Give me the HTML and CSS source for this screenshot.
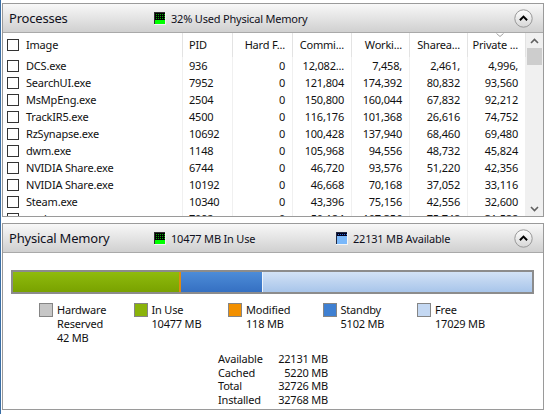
FILE: index.html
```html
<!DOCTYPE html>
<html>
<head>
<meta charset="utf-8">
<link rel="stylesheet" href="styles.css">
</head>
<body>
<div class="win">
  <section class="panel proc">
    <div class="phead">
      <span class="ptitle">Processes</span>
      <span class="pinfo">
        <svg class="meter" width="12" height="13" viewBox="0 0 12 13" shape-rendering="crispEdges">
          <defs><pattern id="gd1" width="2" height="2" patternUnits="userSpaceOnUse"><rect width="2" height="2" fill="#000"/><rect width="1" height="1" fill="#00b000"/></pattern></defs>
          <rect x="0" y="0" width="12" height="13" fill="#f4f4f4"/>
          <rect x="0" y="0" width="11" height="12" fill="#303030"/>
          <rect x="1" y="1" width="10" height="7" fill="url(#gd1)"/>
          <rect x="1" y="8" width="10" height="4" fill="#00ff00"/>
        </svg>
        32% Used Physical Memory
      </span>
      <span class="collapse">
        <svg width="19" height="19" viewBox="0 0 19 19">
          <defs><linearGradient id="cb1" x1="0" y1="0" x2="0" y2="1"><stop offset="0" stop-color="#fefefe"/><stop offset="1" stop-color="#d6d6d6"/></linearGradient></defs>
          <circle cx="9.5" cy="9.5" r="8.7" fill="url(#cb1)" stroke="#979797"/>
          <path d="M5.9 11.2 L9.5 7.6 L13.1 11.2" fill="none" stroke="#000" stroke-width="2"/>
        </svg>
      </span>
    </div>
    <div class="list">
      <div class="table">
        <div class="row head">
          <div class="c img"><span class="cb"></span>Image</div>
          <div class="c pid">PID</div>
          <div class="c">Hard F...</div>
          <div class="c">Commi...</div>
          <div class="c">Worki...</div>
          <div class="c">Sharea...</div>
          <div class="c">Private ...<svg class="sort" width="8" height="4" viewBox="0 0 8 4"><path d="M0.5 0.5 L4 3.5 L7.5 0.5" fill="none" stroke="#a0a0a0" stroke-width="1"/></svg></div>
        </div>
        <div class="row"><div class="c img"><span class="cb"></span>DCS.exe</div><div class="c pid">936</div><div class="c">0</div><div class="c">12,082...</div><div class="c">7,458,</div><div class="c">2,461,</div><div class="c">4,996,</div></div>
        <div class="row"><div class="c img"><span class="cb"></span>SearchUI.exe</div><div class="c pid">7952</div><div class="c">0</div><div class="c">121,804</div><div class="c">174,392</div><div class="c">80,832</div><div class="c">93,560</div></div>
        <div class="row"><div class="c img"><span class="cb"></span>MsMpEng.exe</div><div class="c pid">2504</div><div class="c">0</div><div class="c">150,800</div><div class="c">160,044</div><div class="c">67,832</div><div class="c">92,212</div></div>
        <div class="row"><div class="c img"><span class="cb"></span>TrackIR5.exe</div><div class="c pid">4500</div><div class="c">0</div><div class="c">116,176</div><div class="c">101,368</div><div class="c">26,616</div><div class="c">74,752</div></div>
        <div class="row"><div class="c img"><span class="cb"></span>RzSynapse.exe</div><div class="c pid">10692</div><div class="c">0</div><div class="c">100,428</div><div class="c">137,940</div><div class="c">68,460</div><div class="c">69,480</div></div>
        <div class="row"><div class="c img"><span class="cb"></span>dwm.exe</div><div class="c pid">1148</div><div class="c">0</div><div class="c">105,968</div><div class="c">94,556</div><div class="c">48,732</div><div class="c">45,824</div></div>
        <div class="row"><div class="c img"><span class="cb"></span>NVIDIA Share.exe</div><div class="c pid">6744</div><div class="c">0</div><div class="c">46,720</div><div class="c">93,576</div><div class="c">51,220</div><div class="c">42,356</div></div>
        <div class="row"><div class="c img"><span class="cb"></span>NVIDIA Share.exe</div><div class="c pid">10192</div><div class="c">0</div><div class="c">46,668</div><div class="c">70,168</div><div class="c">37,052</div><div class="c">33,116</div></div>
        <div class="row"><div class="c img"><span class="cb"></span>Steam.exe</div><div class="c pid">10340</div><div class="c">0</div><div class="c">43,396</div><div class="c">75,156</div><div class="c">42,556</div><div class="c">32,600</div></div>
        <div class="row"><div class="c img"><span class="cb"></span>explorer.exe</div><div class="c pid">7092</div><div class="c">0</div><div class="c">50,184</div><div class="c">107,356</div><div class="c">75,748</div><div class="c">31,588</div></div>
      </div>
      <div class="vscroll">
        <div class="arrow"><svg width="9" height="6" viewBox="0 0 9 6"><path d="M1 5 L4.5 1.5 L8 5" fill="none" stroke="#606060" stroke-width="1.6"/></svg></div>
        <div class="track"><div class="thumb"></div></div>
        <div class="arrow"><svg width="9" height="6" viewBox="0 0 9 6"><path d="M1 1 L4.5 4.5 L8 1" fill="none" stroke="#606060" stroke-width="1.6"/></svg></div>
      </div>
    </div>
  </section>

  <section class="panel mem">
    <div class="phead">
      <span class="ptitle">Physical Memory</span>
      <span class="pinfo inuse">
        <svg class="meter" width="12" height="13" viewBox="0 0 12 13" shape-rendering="crispEdges">
          <defs><pattern id="gd2" width="2" height="2" patternUnits="userSpaceOnUse"><rect width="2" height="2" fill="#000"/><rect width="1" height="1" fill="#00b000"/></pattern></defs>
          <rect x="0" y="0" width="12" height="13" fill="#f4f4f4"/>
          <rect x="0" y="0" width="11" height="12" fill="#303030"/>
          <rect x="1" y="1" width="10" height="7" fill="url(#gd2)"/>
          <rect x="1" y="8" width="10" height="4" fill="#00ff00"/>
        </svg>
        10477 MB In Use
      </span>
      <span class="pinfo">
        <svg class="meter" width="12" height="13" viewBox="0 0 12 13" shape-rendering="crispEdges">
          <defs><pattern id="bd1" width="2" height="2" patternUnits="userSpaceOnUse"><rect width="2" height="2" fill="#000020"/><rect width="1" height="1" fill="#3070d0"/></pattern></defs>
          <rect x="0" y="0" width="12" height="13" fill="#f4f4f4"/>
          <rect x="0" y="0" width="11" height="12" fill="#202840"/>
          <rect x="1" y="1" width="10" height="3" fill="url(#bd1)"/>
          <rect x="1" y="4" width="10" height="8" fill="#7ab8fa"/>
        </svg>
        22131 MB Available
      </span>
      <span class="collapse">
        <svg width="19" height="19" viewBox="0 0 19 19">
          <defs><linearGradient id="cb2" x1="0" y1="0" x2="0" y2="1"><stop offset="0" stop-color="#fefefe"/><stop offset="1" stop-color="#d6d6d6"/></linearGradient></defs>
          <circle cx="9.5" cy="9.5" r="8.7" fill="url(#cb2)" stroke="#979797"/>
          <path d="M5.9 11.2 L9.5 7.6 L13.1 11.2" fill="none" stroke="#000" stroke-width="2"/>
        </svg>
      </span>
    </div>
    <div class="mcontent">
      <div class="bar">
        <div class="seg inuse-s"></div>
        <div class="seg mod-s"></div>
        <div class="seg stand-s"></div>
        <div class="seg free-s"></div>
      </div>
      <div class="legend">
        <div class="li"><span class="sw hw"></span><span>Hardware<br>Reserved<br>42 MB</span></div>
        <div class="li"><span class="sw iu"></span><span>In Use<br>10477 MB</span></div>
        <div class="li"><span class="sw md"></span><span>Modified<br>118 MB</span></div>
        <div class="li"><span class="sw sb"></span><span>Standby<br>5102 MB</span></div>
        <div class="li"><span class="sw fr"></span><span>Free<br>17029 MB</span></div>
      </div>
      <div class="stats">
        <span>Available</span><span class="v">22131 MB</span>
        <span>Cached</span><span class="v">5220 MB</span>
        <span>Total</span><span class="v">32726 MB</span>
        <span>Installed</span><span class="v">32768 MB</span>
      </div>
    </div>
  </section>
</div>
</body>
</html>
```

FILE: styles.css
```css
* { box-sizing: border-box; }
html, body { margin: 0; padding: 0; background: #fff; }
body {
  font-family: "Noto Sans", "Open Sans", sans-serif;
  font-size: 11px;
  letter-spacing: -0.2px;
  color: #111;
}
.win {
  width: 546px;
  height: 414px;
  padding: 3px 2px 0 1px;
  border-left: 1px solid #3a6ea5;
  overflow: hidden;
}
.panel {
  border: 1px solid #9a9a9a;
  background: #fff;
}
.proc { height: 214px; }
.mem { margin-top: 6px; height: 187px; }

.phead {
  height: 29px;
  border-bottom: 1px solid #a9a9a9;
  background: linear-gradient(#f8f8f8, #d0d0d0);
  display: flex;
  align-items: center;
  padding-left: 6px;
}
.ptitle {
  width: 145px;
  font-size: 13px;
  color: #101020;
}
.pinfo {
  display: flex;
  align-items: center;
  gap: 5px;
  font-size: 11px;
  color: #101020;
}
.pinfo.inuse { width: 182px; }
.meter { display: block; flex: none; }
.collapse {
  margin-left: auto;
  margin-right: 10px;
  display: flex;
}

.list {
  display: flex;
  height: 183px;
}
.table {
  width: 523px;
  overflow: hidden;
}
.row {
  display: grid;
  grid-template-columns: 180px 50px 60px 59px 58px 58px 58px;
  height: 17px;
  line-height: 17px;
}
.row.head {
  height: 24px;
  line-height: 24px;
}
.c {
  border-right: 1px solid #f0f0f0;
  padding: 0 7px 0 0;
  text-align: right;
  white-space: nowrap;
  overflow: hidden;
}
.head .c {
  border-right-color: #e3e3e3;
  position: relative;
}
.c.img {
  text-align: left;
  padding-left: 4px;
  display: flex;
  align-items: center;
  gap: 7px;
}
.c.pid {
  text-align: left;
  padding-left: 6px;
}
.cb {
  width: 12px;
  height: 12px;
  border: 1px solid #333;
  background: #fff;
  flex: none;
}
.sort {
  position: absolute;
  left: 28px;
  top: 0;
}

.vscroll {
  width: 17px;
  display: flex;
  flex-direction: column;
  background: #f0f0f0;
}
.arrow {
  height: 15px;
  display: flex;
  align-items: center;
  justify-content: center;
  flex: none;
}
.track {
  flex: 1;
  padding: 0 1px;
}
.thumb {
  height: 17px;
  background: #cdcdcd;
}

.mcontent {
  padding: 17px 9px 0 8px;
}
.bar {
  height: 24px;
  border: 2px solid #8c8c8c;
  display: flex;
}
.seg { height: 100%; }
.inuse-s { width: 166px; background: linear-gradient(#8fbb0d, #79a200); }
.mod-s { width: 2px; background: #e08a10; }
.stand-s { width: 81px; background: linear-gradient(#4d8cd8, #3570c2); }
.free-s { flex: 1; background: linear-gradient(#d2e2f6, #a8c5ea); border-left: 1px solid #eef4fb; }

.legend {
  display: grid;
  grid-template-columns: repeat(5, 94.5px);
  margin: 9px 0 0 28px;
}
.li {
  display: flex;
  gap: 4px;
  line-height: 14px;
}
.sw {
  width: 14px;
  height: 14px;
  border: 1px solid #858585;
  flex: none;
}
.sw.hw { background: #c6c6c6; }
.sw.iu { background: #8ab30a; }
.sw.md { background: #f29000; }
.sw.sb { background: #3f80d2; }
.sw.fr { background: #c4d8f2; }

.stats {
  display: grid;
  grid-template-columns: 60px 50px;
  margin: 7px 0 0 207px;
  line-height: 13.5px;
}
.stats .v { text-align: right; }
```
